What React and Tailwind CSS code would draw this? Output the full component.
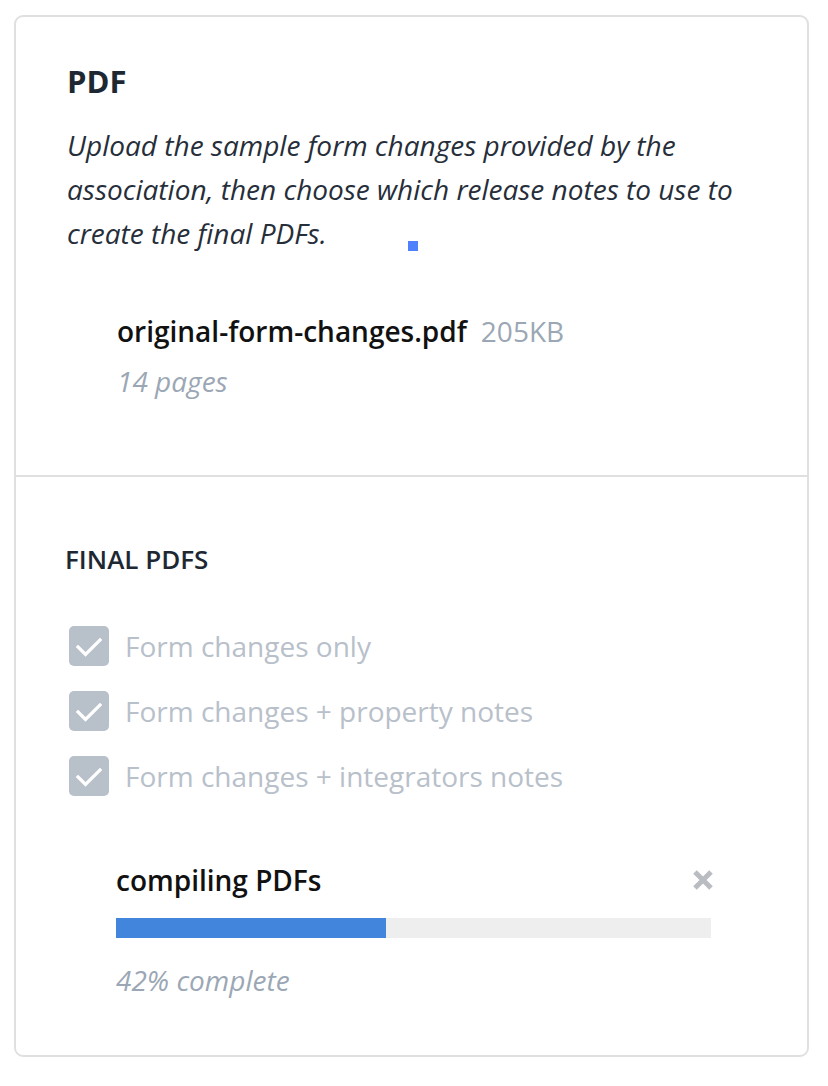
import React from "react";

function Check() {
  return (
    <span className="flex h-[40px] w-[40px] shrink-0 items-center justify-center rounded-[5px] bg-[#b8c0ca]">
      <svg width="30" height="30" viewBox="0 0 30 30" fill="none">
        <path d="M4 16 L11.5 23.5 L26 9" stroke="#ffffff" strokeWidth="3.2" strokeLinecap="square" />
      </svg>
    </span>
  );
}

export default function App() {
  const items = [
    "Form changes only",
    "Form changes + property notes",
    "Form changes + integrators notes",
  ];
  return (
    <div className="min-h-[1086px] bg-white pl-[14px] pt-[15px]" style={{ fontFamily: '"Open Sans", sans-serif' }}>
      <div className="flex h-[1042px] w-[795px] flex-col rounded-[9px] border-2 border-[#e0e0e0]">
        <div className="relative h-[458px] px-[51px] pt-[46px]">
          <h1 className="text-[31px] font-bold leading-[36px] text-[#1e2833]">PDF</h1>
          <p className="mt-[24px] text-[28px] italic leading-[44px] text-[#262e3a]">
            Upload the sample form changes provided by the association, then choose which release notes to use to create the final PDFs.
          </p>
          <span className="absolute left-[392px] top-[224px] h-[10px] w-[10px] bg-[#4f80ff]" />
          <div className="mt-[56px] pl-[50px]">
            <div className="flex items-baseline gap-[14px]">
              <span className="text-[28px] font-semibold leading-[40px] text-[#111111]">original-form-changes.pdf</span>
              <span className="text-[28px] leading-[40px] text-[#9ba7b4]">205KB</span>
            </div>
            <div className="mt-[10px] text-[28px] italic leading-[40px] text-[#9ba7b4]">14 pages</div>
          </div>
        </div>
        <div className="h-[2px] bg-[#e0e0e0]" />
        <div className="flex-1 px-[49px] pt-[66px]">
          <h2 className="text-[26px] font-semibold leading-[32px] text-[#1e2833]">FINAL PDFS</h2>
          <div className="mt-[51px] flex flex-col gap-[25px] pl-[4px]">
            {items.map((t) => (
              <div key={t} className="flex items-center gap-[16px]">
                <Check />
                <span className="text-[28px] leading-[40px] text-[#b8c0ca]">{t}</span>
              </div>
            ))}
          </div>
          <div className="mt-[66px] w-[645px] pl-[51px]">
            <div className="flex items-center justify-between">
              <span className="text-[28px] font-semibold leading-[36px] text-[#111111]">compiling PDFs</span>
              <svg width="22" height="22" viewBox="0 0 22 22" className="mr-[-4px]">
                <path d="M3 3 L19 19 M19 3 L3 19" stroke="#b9bcc0" strokeWidth="5" />
              </svg>
            </div>
            <div className="mt-[20px] h-[20px] w-[595px] bg-[#eeeeee]">
              <div className="h-full w-[270px] bg-[#4285dd]" />
            </div>
            <div className="mt-[22px] text-[28px] italic leading-[40px] text-[#9ba7b4]">42% complete</div>
          </div>
        </div>
      </div>
    </div>
  );
}
